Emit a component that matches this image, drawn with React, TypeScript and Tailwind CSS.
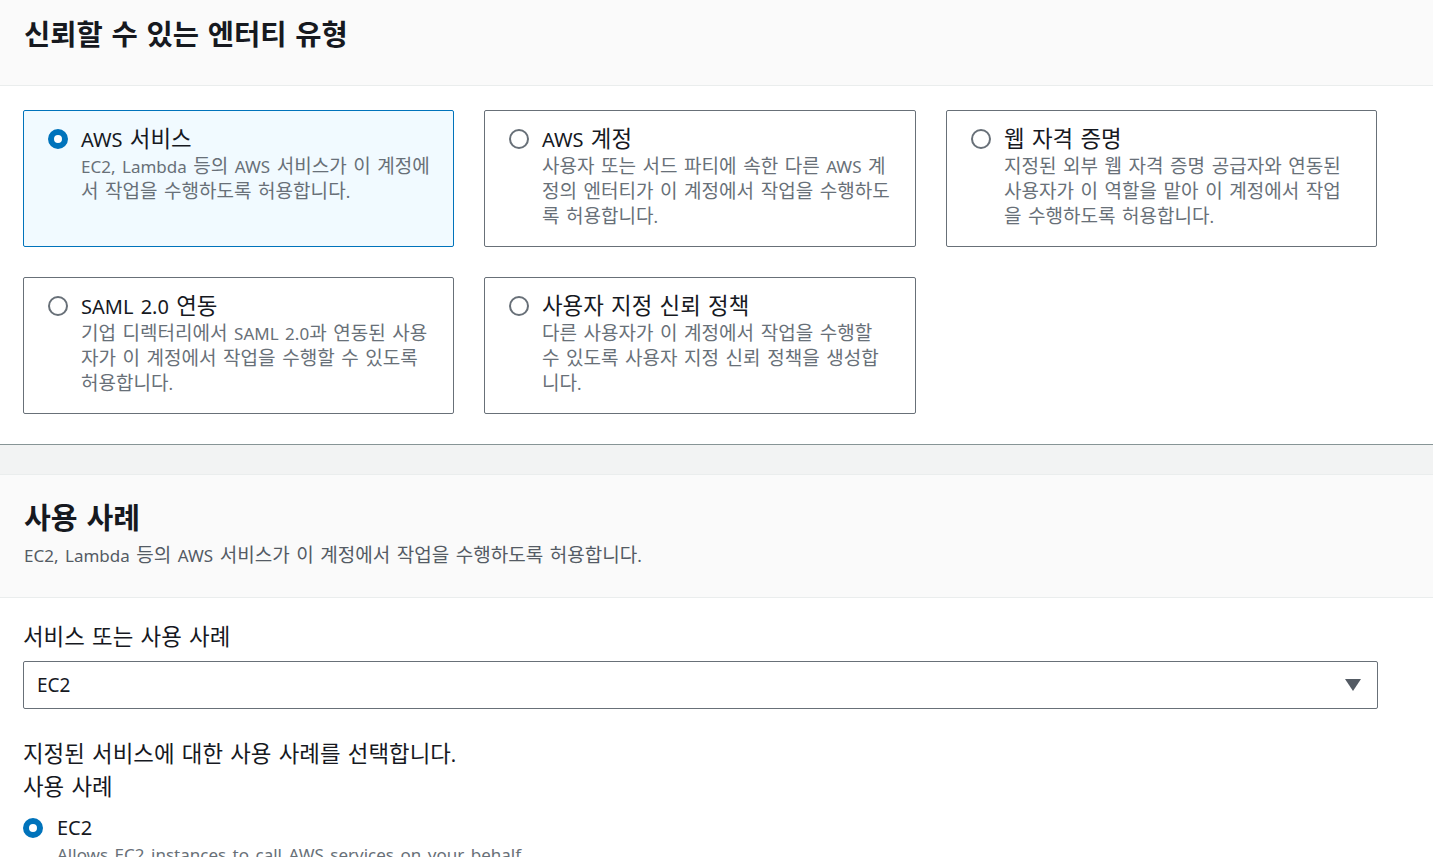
import React from "react";

const font = { fontFamily: '"Noto Sans", "Noto Sans CJK KR", sans-serif' };

// Hangul in the reference is set a bit larger than the Latin text, so wrap hangul runs
function K({ t }: { t: string }) {
  const parts = t.split(/([\uAC00-\uD7A3]+)/);
  return (
    <>
      {parts.map((p, i) =>
        /[\uAC00-\uD7A3]/.test(p) ? (
          <span key={i} className="text-[1.12em]">
            {p}
          </span>
        ) : (
          <React.Fragment key={i}>{p}</React.Fragment>
        )
      )}
    </>
  );
}

type Entity = { id: string; title: string; desc: string };

const entities: Entity[] = [
  { id: "aws", title: "AWS 서비스", desc: "EC2, Lambda 등의 AWS 서비스가 이 계정에서 작업을 수행하도록 허용합니다." },
  { id: "account", title: "AWS 계정", desc: "사용자 또는 서드 파티에 속한 다른 AWS 계정의 엔터티가 이 계정에서 작업을 수행하도록 허용합니다." },
  { id: "web", title: "웹 자격 증명", desc: "지정된 외부 웹 자격 증명 공급자와 연동된 사용자가 이 역할을 맡아 이 계정에서 작업을 수행하도록 허용합니다." },
  { id: "saml", title: "SAML 2.0 연동", desc: "기업 디렉터리에서 SAML 2.0과 연동된 사용자가 이 계정에서 작업을 수행할 수 있도록 허용합니다." },
  { id: "custom", title: "사용자 지정 신뢰 정책", desc: "다른 사용자가 이 계정에서 작업을 수행할 수 있도록 사용자 지정 신뢰 정책을 생성합니다." },
];

function Radio({ checked }: { checked: boolean }) {
  return checked ? (
    <span className="block w-5 h-5 rounded-full border-[6px] border-[#0073bb] bg-white shrink-0" />
  ) : (
    <span className="block w-5 h-5 rounded-full border-2 border-[#687078] bg-white shrink-0" />
  );
}

export default function App() {
  const selected = "aws";

  return (
    <div
      className="w-[1433px] h-[857px] overflow-hidden bg-white text-[#16191f] [word-spacing:0.13em]"
      style={font}
    >
      {/* 신뢰할 수 있는 엔터티 유형 */}
      <div className="h-[86px] bg-[#fafafa] border-b border-[#eaeded] px-6 pt-[16px]">
        <h2 className="text-[25.5px] leading-[36px] font-bold">
          <K t="신뢰할 수 있는 엔터티 유형" />
        </h2>
      </div>
      <div className="px-[23px] pt-6 pb-[30px] border-b border-[#879596]">
        <div className="grid grid-cols-[431px_432px_431px] gap-x-[30px] gap-y-[30px]">
          {entities.map((e) => {
            const on = e.id === selected;
            return (
              <div
                key={e.id}
                className={`h-[137px] rounded-[2px] border pl-6 pr-5 pt-[14px] flex gap-[13px] ${
                  on ? "bg-[#f1faff] border-[#0073bb]" : "bg-white border-[#687078]"
                }`}
              >
                <div className="pt-[4px]">
                  <Radio checked={on} />
                </div>
                <div className="min-w-0 flex-1">
                  <div className="text-[20px] leading-[28px]">
                    <K t={e.title} />
                  </div>
                  <p className="text-[17px] leading-[24px] text-[#687078] break-all">
                    <K t={e.desc} />
                  </p>
                </div>
              </div>
            );
          })}
        </div>
      </div>

      <div className="h-[30px] bg-[#f2f3f3] border-b border-[#eaeded]" />

      {/* 사용 사례 */}
      <div className="h-[123px] bg-[#fafafa] border-b border-[#eaeded] px-6 pt-[25px]">
        <h2 className="text-[26px] leading-[36px] font-bold">
          <K t="사용 사례" />
        </h2>
        <p className="text-[17px] leading-[24px] text-[#545b64] mt-[6px]">
          <K t="EC2, Lambda 등의 AWS 서비스가 이 계정에서 작업을 수행하도록 허용합니다." />
        </p>
      </div>

      <div className="px-[23px] pt-[26px]">
        <label className="block text-[20px] leading-[26px]">
          <K t="서비스 또는 사용 사례" />
        </label>
        <div className="mt-[10px] w-[1355px] h-[48px] rounded-[2px] border border-[#687078] flex items-center justify-between pl-[13px] pr-[16px]">
          <span className="text-[19px]">EC2</span>
          <svg width="16" height="12" viewBox="0 0 16 12">
            <path d="M0 0 H16 L8 12 Z" fill="#545b64" />
          </svg>
        </div>

        <p className="mt-[30px] text-[20px] leading-[30px]">
          <K t="지정된 서비스에 대한 사용 사례를 선택합니다." />
        </p>
        <p className="text-[20px] leading-[34px]">
          <K t="사용 사례" />
        </p>
        <div className="mt-[8px] flex items-center gap-[14px]">
          <Radio checked />
          <span className="text-[20px] leading-[30px]">EC2</span>
        </div>
        <p className="pl-[34px] text-[17px] leading-[24px] text-[#687078]">
          Allows EC2 instances to call AWS services on your behalf.
        </p>
      </div>
    </div>
  );
}
